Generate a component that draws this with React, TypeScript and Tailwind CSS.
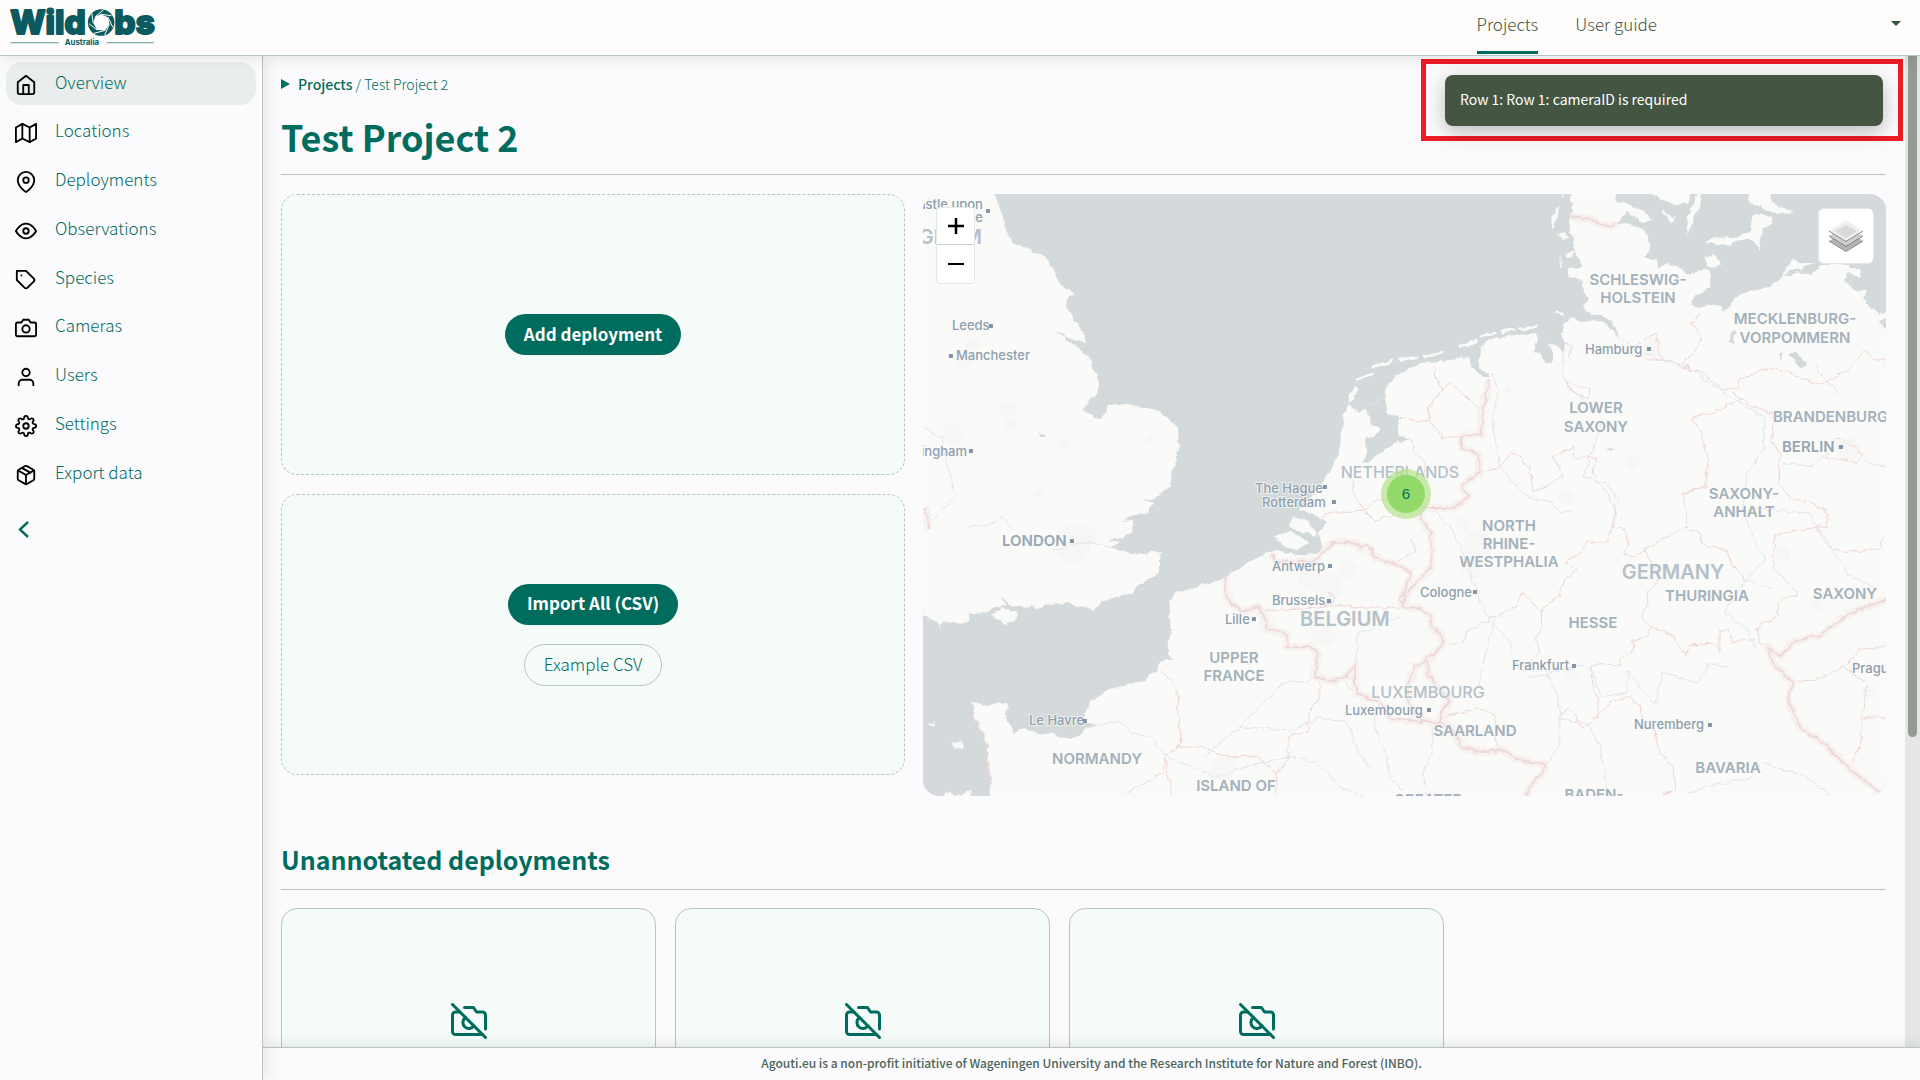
import type { ReactNode } from 'react';
import type { IconType } from 'react-icons';
import {
  FiCamera,
  FiCameraOff,
  FiEye,
  FiHome,
  FiMap,
  FiMapPin,
  FiPackage,
  FiSettings,
  FiTag,
  FiUser,
} from 'react-icons/fi';

interface NavItem {
  label: string;
  icon: IconType;
  active?: boolean;
}

interface MapLabel {
  text: string;
  x: number;
  y: number;
  kind: 'state' | 'country' | 'faded' | 'city' | 'capital';
  anchor?: 'start' | 'middle' | 'end';
  dot?: [number, number];
}

const navItems: NavItem[] = [
  { label: 'Overview', icon: FiHome, active: true },
  { label: 'Locations', icon: FiMap },
  { label: 'Deployments', icon: FiMapPin },
  { label: 'Observations', icon: FiEye },
  { label: 'Species', icon: FiTag },
  { label: 'Cameras', icon: FiCamera },
  { label: 'Users', icon: FiUser },
  { label: 'Settings', icon: FiSettings },
  { label: 'Export data', icon: FiPackage },
];

const unannotated = [1, 2, 3];

// Coastlines, drawn over the sea colour
const land = [
  // Great Britain
  'M-10 -10 L68 -10 L71 0 L79 18 L82 33 L89 49 L112 58 L125 66 L132 78 L134 86 L140 93 L152 100 L145 104 L144 113 L150 124 L159 138 L164 149 L160 146 L152 147 L140 139 L131 140 L139 141 L150 150 L160 158 L166 163 L171 176 L176 188 L176 198 L165 208 L159 215 L167 219 L170 224 L178 225 L182 220 L186 211 L204 210 L230 214 L245 224 L254 234 L256 253 L254 266 L250 274 L247 293 L230 306 L219 305 L232 309 L225 319 L212 321 L197 327 L210 326 L209 338 L200 344 L185 347 L197 349 L187 353 L210 360 L238 357 L236 366 L236 378 L227 384 L214 392 L211 400 L202 400 L177 409 L171 416 L160 414 L142 409 L120 412 L112 417 L109 412 L97 413 L89 411 L77 403 L84 412 L72 414 L65 417 L45 420 L46 427 L39 430 L27 427 L17 429 L18 436 L15 429 L0 420 L-10 416 Z',
  'M68 420 L79 414 L95 419 L92 426 L83 431 L75 426 Z',
  // Mainland
  'M69 612 L67 602 L68 583 L65 566 L65 551 L60 539 L55 533 L50 524 L52 514 L46 507 L64 511 L72 512 L75 508 L83 509 L86 513 L82 518 L84 528 L89 535 L90 539 L100 535 L112 539 L129 540 L144 545 L157 541 L165 534 L177 531 L162 530 L161 523 L166 509 L187 495 L219 488 L235 475 L243 464 L252 466 L245 459 L245 453 L248 436 L246 406 L254 399 L267 394 L292 388 L302 384 L317 375 L337 361 L344 359 L354 356 L365 359 L377 362 L397 359 L399 351 L395 339 L405 329 L390 321 L377 316 L385 306 L400 289 L412 269 L417 253 L420 226 L425 211 L430 215 L437 218 L443 214 L447 223 L449 231 L457 233 L456 239 L450 243 L443 243 L444 256 L440 268 L447 269 L449 265 L474 248 L489 246 L475 241 L475 226 L484 223 L477 223 L462 218 L464 213 L462 199 L467 188 L480 178 L497 169 L507 168 L545 164 L549 173 L560 183 L567 183 L567 178 L555 174 L556 163 L560 149 L574 143 L612 139 L614 148 L610 157 L618 159 L622 168 L629 168 L629 158 L625 150 L632 151 L641 159 L642 149 L639 141 L641 131 L648 123 L659 128 L677 126 L685 130 L697 146 L690 129 L680 122 L669 122 L659 111 L667 106 L659 94 L661 86 L645 83 L645 74 L660 73 L652 56 L649 43 L646 26 L650 16 L648 6 L650 -10 L697 -10 L692 6 L704 10 L719 16 L729 26 L720 28 L710 23 L704 18 L699 24 L690 33 L704 29 L719 35 L726 43 L727 58 L722 64 L734 65 L735 76 L744 70 L757 74 L767 81 L784 75 L788 78 L787 93 L770 104 L769 109 L774 114 L787 111 L797 113 L800 118 L807 113 L810 106 L822 98 L845 94 L859 83 L869 66 L880 69 L892 69 L880 74 L866 76 L862 83 L874 78 L888 80 L898 72 L912 68 L938 76 L937 84 L926 78 L922 86 L930 96 L944 98 L940 104 L950 116 L963 120 L975 122 L975 612 Z',
  // Zeeland
  'M351 344 L359 338 L370 339 L384 346 L387 349 L374 355 L362 352 Z',
  'M365 329 L372 324 L385 326 L393 338 L395 345 L385 339 L370 336 Z',
  'M425 203 L432 191 L435 196 L430 206 L425 209 Z',
  // Danish islands and Fehmarn
  'M782 63 L789 60 L800 71 L792 73 L784 71 Z',
  'M782 49 L790 43 L810 44 L827 38 L830 19 L847 21 L850 29 L839 36 L837 56 L830 46 L817 46 L807 51 Z',
  'M824 -6 L847 -6 L850 9 L870 18 L857 19 L842 16 L827 9 Z',
  'M775 -6 L779 -6 L776 14 L770 26 L765 40 L763 30 L767 16 L772 10 Z',
  'M722 -6 L770 -6 L765 9 L754 11 L737 5 Z',
  'M738 14 L750 24 L754 22 L748 30 Z',
  // North Frisian islands
  'M634 41 L642 38 L646 43 L640 46 Z',
  'M645 59 L652 56 L651 63 L645 64 Z',
  'M630 20 L637 11 L634 22 L631 34 L629 36 Z',
  'M638 62 L640 74 L637 73 Z',
  'M638 -6 L643 -6 L641 4 Z',
  // Channel islands
  'M28 548 L40 549 L40 554 L32 554 Z',
  'M5 530 L12 527 L11 532 Z',
  'M18 602 L24 598 L32 602 L48 597 L50 612 L18 612 Z',
];

const islandChain =
  'M434 187 L449 179 M450 173 L470 167 M477 165 L494 164 M502 163 L520 159 M537 153 L553 148 M558 143 L572 139 M578 138 L590 136 M596 135 L612 133 M634 118 L640 121';

const lakes = [
  'M866 160 L872 158 L883 168 L880 174 L872 168 Z',
  'M855 160 L860 158 L858 166 Z',
  'M808 136 L812 136 L811 150 L807 148 Z',
  'M684 256 L690 254 L688 258 Z',
  'M955 128 L966 124 L966 138 Z',
  'M116 239 L122 240 L121 242 L117 242 Z',
];

const nationalBorders = [
  'M302 384 L305 406 L319 418 L335 413 L342 423 L344 434 L364 441 L365 453 L389 453 L395 459 L392 483 L409 487 L424 483 L432 469 L432 489 L434 499 L457 509 L467 524 L500 528 L517 528 L530 536 L539 554 L560 558 L580 556 L592 564 L624 572',
  'M500 528 L486 510 L484 493 L492 473 L504 466 L505 479 L514 493 L527 506 L519 519 L517 528',
  'M504 466 L520 451 L517 439 L509 433 L507 423 L497 414 L480 413 L478 406 L489 378',
  'M480 413 L484 399 L494 388 L507 376 L510 356 L507 339 L497 323 L500 314 L530 314 L545 303 L539 291 L557 279 L555 259 L539 254 L539 242 L558 241 L560 216 L566 186',
  'M347 361 L354 368 L390 368 L400 358 L410 349 L430 348 L437 354 L445 351 L452 364 L470 369 L489 378',
  'M648 23 L667 25 L687 33 L694 28',
  'M963 406 L927 419 L897 441 L870 448 L857 463 L845 453 L850 469 L870 489 L864 504 L877 533 L900 549 L925 573 L944 589 L957 598',
  'M624 572 L610 589 L602 602',
  'M0 316 L3 316 L5 335',
];

const stateBorders = [
  'M779 119 L769 129 L779 143 L770 159 L760 169 L767 176 L779 178 L800 196 L814 196 L817 186 L844 174 L864 178 L895 191 L924 178 L942 156 L949 164 L963 166',
  'M710 153 L734 139 L735 159 L744 166 L724 166 Z M744 166 L767 176',
  'M817 204 L797 216 L770 224 L780 244 L785 266 L782 293 L759 301 L762 319 L764 334 L750 339 L722 356 L710 363 L700 359 L706 350 L703 336 L690 333',
  'M810 199 L830 213 L850 219 L849 249 L857 259 L855 289 L867 303 L890 309 L905 319 L904 333 L894 333 L852 341 L850 373 L875 399 L855 409 L854 423 L834 433 L837 449 L845 453',
  'M894 333 L905 353 L924 358 L955 356 L960 344',
  'M690 333 L685 348 L664 348 L659 358 L644 368 L654 376 L640 386 L637 403 L620 413 L619 433 L612 446 L617 459 L605 469',
  'M520 451 L540 449 L544 438 L569 424 L592 413 L600 399 L619 419',
  'M764 336 L777 338 L780 351 L804 356 L810 373 L824 386 L850 396',
  'M722 356 L730 372 L737 386 L724 398 L725 409 L719 424 L729 433 L749 441 L762 461 L767 451 L790 449 L797 458 L797 439 L805 436 L810 448 L830 446',
  'M729 433 L724 443 L710 446 L709 458 L697 463 L697 473 L684 469 L669 473 L670 491 L675 506 L674 524 L659 534 L647 516 L637 519',
  'M674 524 L690 506 L705 503 L717 513 L720 526 L732 536 L735 556 L750 573 L752 596 L740 600',
  'M520 523 L555 514 L572 521 L574 553',
  'M870 489 L894 486 L920 473 L937 456 L963 452 M920 473 L944 489 L939 523 L939 543 L929 569 M939 525 L963 523',
  'M319 418 L340 416 L360 416 L394 414 L414 411 L444 414 L479 413',
  'M405 398 L411 402 L408 410 L402 412',
  'M237 476 L254 493 L255 523 L259 548 L254 553 L277 553 L307 563 L335 562 L354 581 L365 566 L365 543 L385 536 L385 519 L397 503 L397 488',
  'M254 553 L242 564 L240 578 L217 593 L204 599 M242 564 L249 602 M354 581 L352 602',
  'M510 169 L512 183 L519 196 L505 213 L507 229 L520 244 L539 242 M519 196 L527 189 L557 214',
  'M484 223 L496 228 L505 226 M489 246 L490 258 L502 268 L504 290',
  'M430 286 L432 303 L442 316 L454 306 L480 306 M395 339 L402 320 L442 316 M442 318 L450 326 L468 322 L476 314',
  'M489 345 L492 358 L477 366 L470 369',
  'M640 186 L667 196 L665 204 L650 198 Z M642 149 L649 153 L645 162',
  'M557 279 L577 273 L589 258 L607 273 L610 296 L627 291 L640 283 L630 263 L650 253 L652 264 L674 263 L669 279 L685 299 L692 316 L690 333',
  'M902 263 L914 243 L939 259 L934 268 Z',
  'M49 508 L52 514 L50 524 L60 539 L65 566 L67 602',
];

const rivers = [
  'M507 313 L527 333 L539 356 L557 406 L567 426 L587 449 L590 466 L605 483 L624 481 L634 499 L637 523 L637 546 L624 573',
  'M624 481 L657 471 L670 476 L677 503 L704 499 L705 478 L732 511 L739 478 L774 489 L787 469 L805 474',
  'M697 144 L710 154 L737 166 L767 174 L797 196 L830 216 L842 223 L840 256 L824 279 L820 316 L830 343 L842 366 L820 389 L802 419 L822 433 L835 456',
  'M569 178 L575 196 L569 229 L577 273 L604 303 L629 308 L637 319 L650 316',
  'M640 159 L640 186 L657 203 L680 223 L674 243 L660 283 L684 289 L695 306 L690 333',
  'M177 531 L197 526 L207 539 L227 543 L244 563 L270 573 L294 583 L334 569 L367 563 L394 568 L417 593 L440 602',
  'M280 563 L317 533 L360 489 L394 486 M317 533 L370 536 L397 524 L424 528 L434 556 L447 574',
  'M477 423 L434 441 L434 466 L420 486 L450 519 L454 539 L464 563 L467 583 L480 596',
  'M764 599 L787 592 L824 586 L840 569 L884 583 L907 602',
  'M637 525 L664 529 L677 553 L684 593',
  'M187 353 L164 348 L130 356 M90 336 L80 323 L67 331 L44 333',
  'M0 233 L17 244 L25 273 L33 301 L17 319 L0 338',
  'M830 313 L886 320 L900 340 L925 380 L955 396',
  'M860 270 L890 272 L905 256 M940 266 L963 274 M890 170 L915 200',
  'M509 528 L510 556 L500 580 L504 600',
  'M572 424 L560 470 L556 492 L548 496',
  'M442 214 L462 202',
];

// Towns show as faint grey patches
const urban = [
  [40, 165, 9], [50, 150, 7], [85, 215, 8], [30, 240, 11], [150, 350, 18], [165, 340, 9], [88, 230, 6],
  [385, 385, 10], [405, 392, 14], [425, 375, 9], [345, 432, 9], [400, 440, 12], [555, 350, 14], [548, 372, 12],
  [540, 330, 7], [730, 152, 10], [710, 268, 7], [643, 304, 7], [925, 255, 12], [860, 360, 8], [893, 410, 6],
  [650, 480, 7], [300, 575, 12], [585, 195, 4], [945, 498, 6], [115, 300, 4], [228, 246, 4], [142, 250, 5],
];

const labels: MapLabel[] = [
  { text: 'Newcastle upon', x: 60, y: 15, kind: 'city', anchor: 'end', dot: [65, 17] },
  { text: 'Tyne', x: 60, y: 28, kind: 'city', anchor: 'end' },
  { text: 'KINGDOM', x: 59, y: 50, kind: 'country', anchor: 'end' },
  { text: 'Leeds', x: 29, y: 136, kind: 'city', dot: [68, 132] },
  { text: 'Manchester', x: 33, y: 166, kind: 'city', dot: [28, 162] },
  { text: 'Birmingham', x: 44, y: 262, kind: 'city', anchor: 'end', dot: [48, 257] },
  { text: 'LONDON', x: 79, y: 352, kind: 'capital', dot: [149, 347] },
  { text: 'Le Havre', x: 106, y: 531, kind: 'city', dot: [162, 527] },
  { text: 'NORMANDY', x: 174, y: 570, kind: 'state', anchor: 'middle' },
  { text: 'UPPER', x: 311, y: 469, kind: 'state', anchor: 'middle' },
  { text: 'FRANCE', x: 311, y: 487, kind: 'state', anchor: 'middle' },
  { text: 'ISLAND OF', x: 313, y: 597, kind: 'state', anchor: 'middle' },
  { text: 'GREATER', x: 505, y: 611, kind: 'state', anchor: 'middle' },
  { text: 'NETHERLANDS', x: 477, y: 284, kind: 'faded', anchor: 'middle' },
  { text: 'The Hague', x: 332, y: 299, kind: 'city', dot: [402, 293] },
  { text: 'Rotterdam', x: 339, y: 313, kind: 'city', dot: [411, 308] },
  { text: 'Antwerp', x: 349, y: 377, kind: 'city', dot: [407, 372] },
  { text: 'Brussels', x: 349, y: 411, kind: 'city', dot: [406, 407] },
  { text: 'Lille', x: 302, y: 430, kind: 'city', dot: [331, 425] },
  { text: 'BELGIUM', x: 422, y: 432, kind: 'country', anchor: 'middle' },
  { text: 'LUXEMBOURG', x: 505, y: 504, kind: 'faded', anchor: 'middle' },
  { text: 'Luxembourg', x: 422, y: 521, kind: 'city', dot: [506, 516] },
  { text: 'NORTH', x: 586, y: 337, kind: 'state', anchor: 'middle' },
  { text: 'RHINE-', x: 586, y: 355, kind: 'state', anchor: 'middle' },
  { text: 'WESTPHALIA', x: 586, y: 373, kind: 'state', anchor: 'middle' },
  { text: 'Cologne', x: 497, y: 403, kind: 'city', dot: [552, 398] },
  { text: 'GERMANY', x: 750, y: 385, kind: 'country', anchor: 'middle' },
  { text: 'THURINGIA', x: 784, y: 407, kind: 'state', anchor: 'middle' },
  { text: 'SAXONY', x: 922, y: 405, kind: 'state', anchor: 'middle' },
  { text: 'HESSE', x: 670, y: 434, kind: 'state', anchor: 'middle' },
  { text: 'Frankfurt', x: 589, y: 476, kind: 'city', dot: [651, 472] },
  { text: 'SAARLAND', x: 552, y: 542, kind: 'state', anchor: 'middle' },
  { text: 'Nuremberg', x: 711, y: 535, kind: 'city', dot: [787, 531] },
  { text: 'BAVARIA', x: 805, y: 579, kind: 'state', anchor: 'middle' },
  { text: 'BADEN-', x: 671, y: 606, kind: 'state', anchor: 'middle' },
  { text: 'Prague', x: 929, y: 479, kind: 'city' },
  { text: 'SCHLESWIG-', x: 715, y: 91, kind: 'state', anchor: 'middle' },
  { text: 'HOLSTEIN', x: 715, y: 109, kind: 'state', anchor: 'middle' },
  { text: 'MECKLENBURG-', x: 872, y: 130, kind: 'state', anchor: 'middle' },
  { text: 'VORPOMMERN', x: 872, y: 149, kind: 'state', anchor: 'middle' },
  { text: 'Hamburg', x: 662, y: 160, kind: 'city', dot: [726, 155] },
  { text: 'LOWER', x: 673, y: 219, kind: 'state', anchor: 'middle' },
  { text: 'SAXONY', x: 673, y: 238, kind: 'state', anchor: 'middle' },
  { text: 'BRANDENBURG', x: 850, y: 228, kind: 'state' },
  { text: 'BERLIN', x: 859, y: 258, kind: 'capital', dot: [918, 253] },
  { text: 'SAXONY-', x: 821, y: 305, kind: 'state', anchor: 'middle' },
  { text: 'ANHALT', x: 821, y: 323, kind: 'state', anchor: 'middle' },
];

const labelStyles = {
  state: 'text-[15px] font-semibold fill-[#a3b1bb]',
  country: 'text-[20px] font-semibold fill-[#b4c1c9]',
  faded: 'text-[16px] font-medium fill-[#b4c0c8]',
  city: 'text-[13px] font-medium fill-[#8e9fae]',
  capital: 'text-[15px] font-semibold fill-[#97a7b4]',
};

function Logo() {
  return (
    <svg viewBox="0 0 160 56" className="h-[55px] w-[160px]" role="img" aria-label="WildObs Australia">
      <g className="fill-[#0b5a60] stroke-[#0b5a60] font-['Inter',sans-serif] text-[34px] font-extrabold" strokeWidth="2" strokeLinejoin="round">
        <text x="9" y="35">Wild</text>
        <text x="115" y="35">bs</text>
      </g>
      <circle cx="101.500" cy="23" r="13.500" className="fill-[#0b5a60]" />
      <path d="M101 14.500 L108.500 17.500 L110 24.500 L105.500 31 L97.500 30.500 L93.500 23.500 L95.500 17 Z" className="fill-[#fffdfc]" />
      <path
        d="M101 14.500 L112 16 M108.500 17.500 L113.500 28 M110 24.500 L105 36 M105.500 31 L94 34 M97.500 30.500 L89 24 M93.500 23.500 L92 13.500 M95.500 17 L104 10"
        className="stroke-[#fffdfc]"
        strokeWidth="1"
      />
      <path d="M9 43.500 H58 M107 43.500 H155" className="stroke-[#5f9592]" strokeWidth="1" />
      <text x="82" y="46" textAnchor="middle" className="fill-[#0b5a60] font-['Inter',sans-serif] text-[8px] font-bold">
        Australia
      </text>
    </svg>
  );
}

function LayersIcon() {
  return (
    <svg viewBox="0 0 34 32" className="h-8 w-[34px]" aria-hidden="true">
      <path d="M0 21 L17 31 L34 21 L17 11 Z" fill="#b4b4b4" />
      <path d="M0 21 L17 31.500 L34 21" fill="none" stroke="#858585" />
      <path d="M0 16 L17 26 L34 16 L17 6 Z" fill="#cfcfcf" />
      <path d="M0 16 L17 26.500 L34 16" fill="none" stroke="#858585" />
      <path d="M0 11 L17 21 L34 11 L17 0 Z" fill="#efefef" />
      <path d="M6 11 L17 18.500 L28 11 L17 5 Z" fill="#dadada" />
      <path d="M0 11 L17 21.500 L34 11" fill="none" stroke="#8c8c8c" />
    </svg>
  );
}

function DeploymentMap() {
  return (
    <div className="relative h-[602px] overflow-hidden rounded-2xl bg-[#d4dadc]">
      <svg viewBox="0 0 963 602" preserveAspectRatio="xMidYMid slice" className="h-full w-full" role="img" aria-label="Map of deployments">
        <defs>
          <filter id="rough" x="0" y="0" width="963" height="602" filterUnits="userSpaceOnUse">
            <feTurbulence type="fractalNoise" baseFrequency="0.120" numOctaves="3" seed="4" />
            <feDisplacementMap in="SourceGraphic" scale="6" xChannelSelector="R" yChannelSelector="G" />
          </filter>
        </defs>
        <g filter="url(#rough)">
          {land.map((d) => (
            <path key={d} d={d} fill="#fafaf8" />
          ))}
          <path d={islandChain} fill="none" stroke="#fafaf8" strokeWidth="3" strokeLinecap="round" />
          {urban.map(([x, y, r]) => (
            <circle key={`${x}-${y}`} cx={x} cy={y} r={r} fill="#f6f6f5" />
          ))}
          {lakes.map((d) => (
            <path key={d} d={d} fill="#d4dadc" />
          ))}
          <g fill="none" strokeLinejoin="round">
            {rivers.map((d) => (
              <path key={d} d={d} stroke="#e0e6ea" strokeWidth="1" />
            ))}
            {stateBorders.map((d) => (
              <path key={d} d={d} stroke="#efd5d9" strokeWidth="1" />
            ))}
            {nationalBorders.map((d) => (
              <path key={d} d={d} stroke="#f7f1f0" strokeWidth="8" />
            ))}
            {nationalBorders.map((d) => (
              <path key={d} d={d} stroke="#efd8db" strokeWidth="2" />
            ))}
          </g>
        </g>
        <g className="font-['Inter',sans-serif]">
          {labels.map((l) => (
            <g key={`${l.text}-${l.x}-${l.y}`}>
              <text
                x={l.x}
                y={l.y}
                textAnchor={l.anchor ?? 'start'}
                className={labelStyles[l.kind]}
                stroke="#fafaf8"
                strokeWidth="2"
                strokeOpacity="0.7"
                paintOrder="stroke"
              >
                {l.text}
              </text>
              {l.dot && <rect x={l.dot[0] - 2} y={l.dot[1] - 2} width="4" height="4" fill="#8496a6" />}
            </g>
          ))}
        </g>
        <circle cx="483" cy="300" r="25" fill="#b5e28c" fillOpacity="0.700" />
        <circle cx="483" cy="300" r="19" fill="#8fd866" fillOpacity="0.950" />
        <text x="483" y="305" textAnchor="middle" className="fill-[#006c5d] font-['Liberation_Sans',sans-serif] text-[15px]">
          6
        </text>
      </svg>

      {/* Zoom control */}
      <div className="absolute left-[13px] top-[13px] flex w-[39px] flex-col overflow-hidden rounded border border-[#dfe9e6] bg-white">
        <button type="button" aria-label="Zoom in" className="flex h-[37px] items-center justify-center border-b border-[#ccc]">
          <svg viewBox="0 0 16 16" className="size-4" aria-hidden="true">
            <path d="M8 0 V16 M0 8 H16" stroke="#000" strokeWidth="2.500" />
          </svg>
        </button>
        <button type="button" aria-label="Zoom out" className="flex h-[38px] items-center justify-center">
          <svg viewBox="0 0 16 16" className="size-4" aria-hidden="true">
            <path d="M0 8 H16" stroke="#000" strokeWidth="2" />
          </svg>
        </button>
      </div>

      <button
        type="button"
        aria-label="Layers"
        className="absolute right-3 top-[14px] flex size-14 items-center justify-center rounded-md border border-[#dfe9e6] bg-white"
      >
        <LayersIcon />
      </button>
    </div>
  );
}

function DashedCard({ children }: { children: ReactNode }) {
  return (
    <div className="flex h-[281px] flex-col items-center justify-center gap-[19px] rounded-2xl border border-dashed border-[#b9c5c3] bg-[#f5fbf9]">
      {children}
    </div>
  );
}

export default function App() {
  return (
    <div className="flex h-screen flex-col overflow-hidden bg-[#fbfbfe] font-['Noto_Sans_CJK_SC','Noto_Sans',sans-serif] text-[#006c5d]">
      <header className="relative z-20 flex h-14 shrink-0 items-stretch justify-between border-b border-[#b9c5c3] bg-[#fffdfc] shadow-[0_0_16px_rgba(0,0,0,0.12)]">
        <a href="#home">
          <Logo />
        </a>
        <nav className="flex items-stretch pr-[19px] text-[17px] font-light leading-6 text-[#445542]">
          <a href="#projects" className="mb-px mr-[37px] border-b-[3px] border-[#006c5d] pt-3">
            Projects
          </a>
          <a href="#guide" className="pt-3">
            User guide
          </a>
          <button type="button" aria-label="Account" className="ml-[234px] self-start pt-[21px]">
            <svg viewBox="0 0 10 5" className="h-[5px] w-[10px]" aria-hidden="true">
              <path d="M0 0 H10 L5 5 Z" fill="#344e3c" />
            </svg>
          </button>
        </nav>
      </header>

      <div className="flex min-h-0 flex-1">
        {/* Sidebar */}
        <aside className="relative z-10 w-[263px] shrink-0 border-r border-[#b9c5c3] bg-[#fbfbfe] pl-[6px] pr-[6px] pt-[6px] shadow-[0_0_16px_rgba(0,0,0,0.12)]">
          <nav className="flex h-[433px] flex-col justify-between">
            {navItems.map(({ label, icon: Icon, active }) => (
              <a
                key={label}
                href={`#${label}`}
                className={`flex h-[43px] items-center rounded-2xl pl-[9px] text-[17px] font-light leading-6 ${active ? 'bg-[#e9eded]' : ''}`}
              >
                <Icon size={22} className="mt-0.5 text-black" />
                <span className="mb-1 ml-[18px]">{label}</span>
              </a>
            ))}
          </nav>
          <button type="button" aria-label="Collapse menu" className="ml-3 mt-[26px] block">
            <svg viewBox="0 0 11 17" className="h-[17px] w-[11px]" aria-hidden="true">
              <path d="M10 1 L2 8.500 L10 16" fill="none" stroke="#006c5d" strokeWidth="2.400" />
            </svg>
          </button>
        </aside>

        <div className="flex min-w-0 flex-1 flex-col">
          <div className="flex min-h-0 flex-1">
            <main className="min-w-0 flex-1 overflow-hidden pl-[18px] pr-[19px] pt-[18px]">
              <div className="flex items-center text-[14px] leading-5">
                <svg viewBox="0 0 9 10" className="mr-2 h-[10px] w-[9px]" aria-hidden="true">
                  <path d="M0 0 L9 5 L0 10 Z" fill="#006c5d" />
                </svg>
                <a href="#projects" className="font-medium">Projects</a>
                <span className="whitespace-pre font-light"> / Test Project 2</span>
              </div>

              <h1 className="mt-5 border-b border-[#b9c5c3] pb-4 text-[36px] font-bold leading-[44px]">Test Project 2</h1>

              <div className="mt-[19px] grid grid-cols-[35fr_54fr] items-start gap-[18px]">
                <div className="flex flex-col gap-[19px]">
                  <DashedCard>
                    <button type="button" className="h-[41px] rounded-full bg-[#006c5d] px-[19px] pb-0.5 text-[17px] font-bold text-white">
                      Add deployment
                    </button>
                  </DashedCard>
                  <DashedCard>
                    <button type="button" className="h-[41px] rounded-full bg-[#006c5d] px-[19px] pb-0.5 text-[17px] font-bold text-white">
                      Import All (CSV)
                    </button>
                    <button type="button" className="h-[42px] rounded-full border border-[#b9c5c3] px-[19px] pb-0.5 text-[17px] font-light">
                      Example CSV
                    </button>
                  </DashedCard>
                </div>
                <DeploymentMap />
              </div>

              <h2 className="mt-12 border-b border-[#b9c5c3] pb-[15px] text-[25px] font-bold leading-[30px]">Unannotated deployments</h2>
              <div className="mt-[18px] flex flex-wrap gap-[19px]">
                {unannotated.map((id) => (
                  <a
                    key={id}
                    href={`#deployment-${id}`}
                    aria-label="Unannotated deployment"
                    className="flex h-[226px] w-[375px] items-center justify-center rounded-2xl border border-[#b9c5c3] bg-[#f5fbf9]"
                  >
                    <FiCameraOff size={36} />
                  </a>
                ))}
              </div>
            </main>
            {/* Scrollbar */}
            <div className="flex w-[15px] shrink-0 justify-center bg-[#e5e7e4]">
              <div className="h-11/16 w-[9px] rounded-b-full bg-[#929b93]" />
            </div>
          </div>

          <footer className="relative flex h-[33px] shrink-0 items-center justify-center border-t border-[#b9c5c3] bg-[#fbfbfe] pb-0.5 text-[12px] font-medium text-[#4d6358] shadow-[0_0_16px_rgba(0,0,0,0.12)]">
            Agouti.eu is a non-profit initiative of Wageningen University and the Research Institute for Nature and Forest (INBO).
          </footer>
        </div>
      </div>

      {/* Notification */}
      <div className="absolute right-[17px] top-[59px] z-10 w-[482px] border-[5px] border-[#ee1c25] pb-[10px] pl-[19px] pr-[15px] pt-[11px]">
        <div role="alert" className="rounded-lg bg-[#445542] px-[15px] pb-[15px] pt-3 text-[14px] leading-6 text-white shadow-[0_6px_20px_rgba(0,0,0,0.25)]">
          Row 1: Row 1: cameraID is required
        </div>
      </div>
    </div>
  );
}
